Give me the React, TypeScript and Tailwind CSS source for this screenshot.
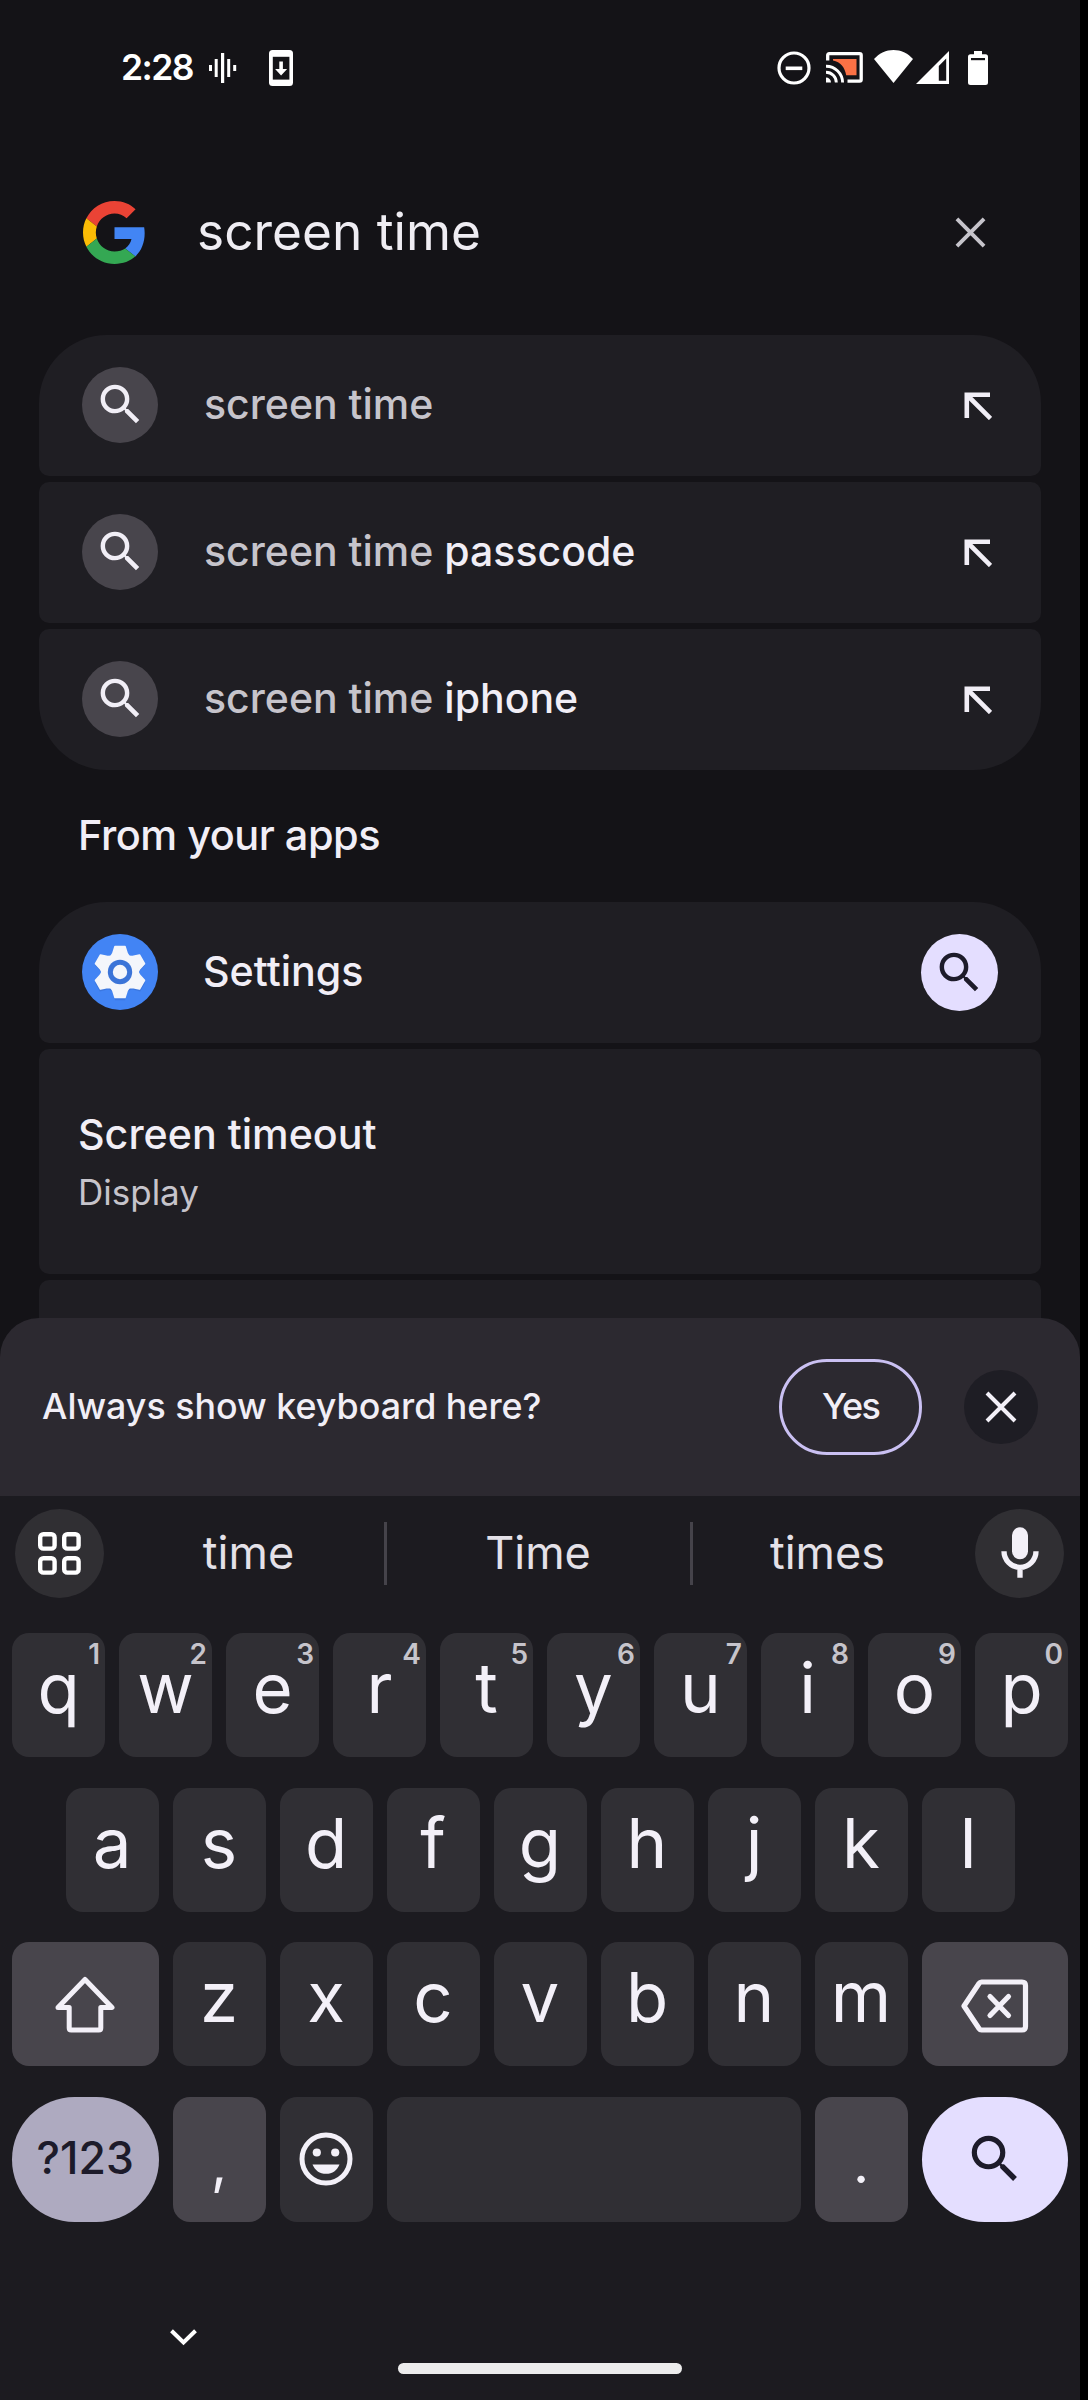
import React from "react";

/* ---------- icons ---------- */

function SearchIcon({ className }: { className: string }) {
  return (
    <svg viewBox="0 0 24 24" className={className} fill="currentColor">
      <path d="M15.5 14h-.79l-.28-.27A6.471 6.471 0 0 0 16 9.5 6.5 6.5 0 1 0 9.5 16c1.61 0 3.09-.59 4.23-1.57l.27.28v.79l5 4.99L20.49 19l-4.99-5zm-6 0C7.01 14 5 11.99 5 9.5S7.01 5 9.5 5 14 7.01 14 9.5 11.99 14 9.5 14z" />
    </svg>
  );
}

function GoogleLogo() {
  return (
    <svg viewBox="0 0 48 48" className="size-[63px]">
      <path fill="#ea4335" d="M24 9.5c3.54 0 6.71 1.22 9.21 3.6l6.85-6.85C35.9 2.38 30.47 0 24 0 14.62 0 6.51 5.38 2.56 13.22l7.98 6.19C12.43 13.72 17.74 9.5 24 9.5z" />
      <path fill="#4285f4" d="M46.98 24.55c0-1.57-.15-3.09-.38-4.55H24v9.02h12.94c-.58 2.96-2.26 5.48-4.78 7.18l7.73 6c4.51-4.18 7.09-10.36 7.09-17.65z" />
      <path fill="#fbbc05" d="M10.53 28.59c-.48-1.45-.76-2.99-.76-4.59s.27-3.14.76-4.59l-7.98-6.19C.92 16.46 0 20.12 0 24c0 3.88.92 7.54 2.56 10.78l7.97-6.19z" />
      <path fill="#34a853" d="M24 48c6.48 0 11.93-2.13 15.89-5.81l-7.73-6c-2.15 1.45-4.92 2.3-8.16 2.3-6.26 0-11.57-4.22-13.47-9.91l-7.98 6.19C6.51 42.62 14.62 48 24 48z" />
    </svg>
  );
}

function CloseIcon({ className }: { className: string }) {
  return (
    <svg viewBox="0 0 32 32" className={className} fill="none" stroke="currentColor" strokeWidth="4">
      <path d="M2 2l28 28M30 2L2 30" />
    </svg>
  );
}

function InsertArrow() {
  return (
    <svg viewBox="0 0 28 28" className="h-7 w-7 text-[#f1eef6]" fill="none" stroke="currentColor" strokeWidth="4.6">
      <path d="M26 2.8H2.8V26M3.5 3.5L26.5 26.5" />
    </svg>
  );
}

function SettingsIcon() {
  return (
    <svg viewBox="-38 -38 76 76" className="size-[76px]">
      <circle r="38" fill="#4284f4" />
      <g fill="#3569c9" opacity="0.45" transform="translate(0 2)">
        <circle r="19" />
        {[0, 60, 120, 180, 240, 300].map((a) => (
          <path key={a} transform={`rotate(${a})`} d="M-5 -26.2H5L7.2 -18.5L10 -14H-10L-7.2 -18.5Z" />
        ))}
      </g>
      <g fill="#f4f6fb" stroke="#f4f6fb" strokeWidth="1.6" strokeLinejoin="round">
        <circle r="18" />
        {[0, 60, 120, 180, 240, 300].map((a) => (
          <path key={a} transform={`rotate(${a})`} d="M-5 -25.4H5L7.2 -18.5L10 -14H-10L-7.2 -18.5Z" />
        ))}
      </g>
      <circle r="12.2" fill="#3b74d8" />
      <circle r="7.2" fill="#f4f6fb" />
    </svg>
  );
}

/* ---------- status bar ---------- */

function StatusBar() {
  return (
    <header className="flex h-[135px] items-center pr-[92px] pl-[121px] text-white">
      <span className="text-[35.5px] font-semibold tracking-[-1.6px]">2:28</span>
      <svg viewBox="0 0 28 30" className="ml-4 h-[30px] w-7" fill="currentColor">
        <rect x="0" y="12" width="3" height="6" />
        <rect x="5.7" y="6" width="3" height="18" />
        <rect x="12" y="0" width="3.2" height="30" />
        <rect x="18.2" y="6" width="3" height="18" />
        <rect x="24.2" y="12" width="3" height="6" />
      </svg>
      <svg viewBox="0 0 24 36" className="ml-8 h-9 w-6">
        <rect width="24" height="36" rx="3.5" fill="currentColor" />
        <rect x="3.8" y="6.8" width="16.6" height="22.8" fill="#141317" />
        <path fill="currentColor" d="M10.3 11.5h3.6v7.5h4.2L12.1 25.5 6.1 19h4.2z" />
      </svg>

      <div className="ml-auto flex items-center">
        <svg viewBox="0 0 34 34" className="size-[34px]" fill="none" stroke="currentColor">
          <circle cx="17" cy="17" r="15" strokeWidth="3.2" />
          <path d="M8.7 17.3h16.6" strokeWidth="3.6" />
        </svg>
        <svg viewBox="0 0 37 31" className="ml-[15px] h-[31px] w-[37px]" fill="none" stroke="currentColor">
          <path d="M7 7H30.5V23.3H20.2C19 15.5 14.5 10 7 8.5z" fill="#fb7145" stroke="none" />
          <path d="M1.7 8.5V3.2Q1.7 1.7 3.2 1.7H33.6Q35.2 1.7 35.2 3.2V27.6Q35.2 29.2 33.6 29.2H21.5" strokeWidth="3.3" />
          <path d="M0 14.2A16.4 16.4 0 0 1 16.6 30.6M0 20.3A10.3 10.3 0 0 1 10.3 30.6" strokeWidth="2.9" />
          <path d="M0 25.6a5 5 0 0 1 5 5H0z" fill="currentColor" stroke="none" />
        </svg>
        <svg viewBox="0 0 39 33" className="-mt-0.5 ml-[11px] h-[33px] w-[39px]" fill="currentColor">
          <path d="M0 9C5.5 3 12 0 19.5 0S33.5 3 39 9L19.5 33z" />
        </svg>
        <svg viewBox="0 0 33 33" className="ml-[3px] h-[33px] w-[33px]" fill="currentColor">
          <path fillRule="evenodd" d="M33 0V33H0zM30.2 7.5L22.8 15V29.8H30.2z" />
        </svg>
        <svg viewBox="0 0 20 34" className="ml-[19px] h-[34px] w-5">
          <path fill="currentColor" d="M6 0h8v3.3h3.5Q20 3.3 20 5.8V31.5Q20 34 17.5 34H2.5Q0 34 0 31.5V5.8Q0 3.3 2.5 3.3H6z" />
          <rect x="3" y="7" width="14" height="2.2" fill="#141317" />
        </svg>
      </div>
    </header>
  );
}

/* ---------- search results ---------- */

function Suggestion({ completion, shape }: { completion?: string; shape: string }) {
  return (
    <li className={`flex h-[141px] items-center bg-[#1f1e23] pr-[49px] pb-0.5 pl-[43px] ${shape}`}>
      <span className="flex size-[76px] items-center justify-center rounded-full bg-[#48454c] text-[#f1eef6]">
        <SearchIcon className="size-[53px]" />
      </span>
      <span className="ml-[46px] flex-1 text-[41px] leading-none font-medium text-[#f1eef6]">
        <span className="text-[#c6c4cb]">screen time</span>
        {completion ? ` ${completion}` : null}
      </span>
      <span className="mt-0.5">
        <InsertArrow />
      </span>
    </li>
  );
}

function Results() {
  return (
    <main className="px-[39px]">
      <ul className="flex flex-col gap-1.5">
        <Suggestion shape="rounded-t-[68px] rounded-b-[10px]" />
        <Suggestion completion="passcode" shape="rounded-[10px]" />
        <Suggestion completion="iphone" shape="rounded-t-[10px] rounded-b-[68px]" />
      </ul>

      <h2 className="flex h-[132px] items-center pl-[39px] text-[41.5px] leading-none font-medium tracking-[-0.5px] text-[#f1eef6]">
        From your apps
      </h2>

      <section className="flex flex-col gap-1.5">
        <div className="flex h-[141px] items-center rounded-t-[68px] rounded-b-[10px] bg-[#1f1e23] px-[43px] pb-px">
          <SettingsIcon />
          <span className="ml-[45px] flex-1 text-[41.2px] leading-none font-medium text-[#f1eef6]">Settings</span>
          <button className="flex size-[77px] items-center justify-center rounded-full bg-[#e4deff] text-[#1d1b2a]">
            <SearchIcon className="size-[53px]" />
          </button>
        </div>
        <div className="flex h-[225px] flex-col justify-center gap-[13px] rounded-[10px] bg-[#1f1e23] pl-[39px]">
          <span className="text-[41.2px] leading-[48px] font-medium text-[#f1eef6]">Screen timeout</span>
          <span className="text-[35px] leading-[42px] text-[#c6c4cb]">Display</span>
        </div>
        <div className="h-[80px] rounded-t-[10px] bg-[#1f1e23]" />
      </section>
    </main>
  );
}

/* ---------- keyboard ---------- */

const KEY = "relative flex h-[124px] w-[93px] shrink-0 justify-center rounded-[17px] bg-[#302f34]";

function LetterKey({ letter, hint }: { letter: string; hint?: string }) {
  return (
    <button className={KEY}>
      <span className="text-[69px] leading-[110px] text-[#f3f0f8]">{letter}</span>
      {hint ? (
        <span className="absolute top-0 right-[5px] text-[28px] leading-[43px] font-semibold text-[#c6c4cb]">{hint}</span>
      ) : null}
    </button>
  );
}

function Letters({ letters }: { letters: string }) {
  return (
    <>
      {letters.split("").map((l) => (
        <LetterKey key={l} letter={l} />
      ))}
    </>
  );
}

function SuggestionStrip() {
  return (
    <div className="flex h-[115px] items-center pr-4 pl-[15px]">
      <button className="flex size-[89px] items-center justify-center rounded-full bg-[#302f33]">
        <svg viewBox="0 0 43 43" className="size-[43px]" fill="none" stroke="#ffffff" strokeWidth="4.4">
          <rect x="2.2" y="2.2" width="14.4" height="14.4" rx="3.2" />
          <rect x="26.2" y="2.2" width="14.4" height="14.4" rx="3.2" />
          <rect x="2.2" y="26.2" width="14.4" height="14.4" rx="3.2" />
          <rect x="26.2" y="26.2" width="14.4" height="14.4" rx="3.2" />
        </svg>
      </button>
      <div className="flex flex-1 items-center text-[45px] leading-none text-[#e4e1e8]">
        <span className="w-[280px] pb-[3px] pl-[9px] text-center">time</span>
        <span className="h-[63px] w-[3px] bg-[#45434a]" />
        <span className="w-[303px] pr-px pb-[3px] text-center">Time</span>
        <span className="h-[63px] w-[3px] bg-[#45434a]" />
        <span className="flex-1 pr-[13px] pb-[3px] text-center">times</span>
      </div>
      <button className="flex size-[89px] items-center justify-center rounded-full bg-[#302f33]">
        <svg viewBox="0 0 24 24" className="size-16" fill="none" stroke="#f3f0f8" strokeWidth="2">
          <rect x="9" y="2" width="6" height="12" rx="3" fill="#f3f0f8" stroke="none" />
          <path d="M6 11a6 6 0 0 0 12 0M12 17v3.9" />
        </svg>
      </button>
    </div>
  );
}

function Keyboard() {
  const top = "qwertyuiop".split("");
  return (
    <section className="flex flex-1 flex-col bg-[#1c1b20]">
      <SuggestionStrip />
      <div className="mt-[22px] flex flex-col gap-[30.6px] px-3">
        <div className="flex gap-3.5">
          {top.map((l, i) => (
            <LetterKey key={l} letter={l} hint={String((i + 1) % 10)} />
          ))}
        </div>
        <div className="flex justify-center gap-3.5">
          <Letters letters="asdfghjkl" />
        </div>
        <div className="flex gap-3.5">
          <button className="flex h-[124px] flex-1 items-center justify-center rounded-[17px] bg-[#48454c]">
            <svg viewBox="0 0 60 57" className="h-[57px] w-[60px]" fill="none" stroke="#f3f0f8" strokeWidth="5" strokeLinejoin="round">
              <path d="M30 3.5L57 31.5H45.8V52Q45.8 54 43.8 54H16.2Q14.2 54 14.2 52V31.5H3z" />
            </svg>
          </button>
          <Letters letters="zxcvbnm" />
          <button className="flex h-[124px] flex-1 items-center justify-center rounded-[17px] bg-[#48454c]">
            <svg viewBox="0 0 68 54" className="mt-1 h-[54px] w-[68px]" fill="none" stroke="#f3f0f8" strokeWidth="5.2" strokeLinejoin="round" strokeLinecap="round">
              <path d="M20.5 3H61Q64.5 3 64.5 6.5V47.5Q64.5 51 61 51H20.5Q19 51 18 49.5L3 27L18 4.5Q19 3 20.5 3z" />
              <path d="M29 17.5L47.5 36.5M47.5 17.5L29 36.5" />
            </svg>
          </button>
        </div>
        <div className="flex gap-3.5">
          <button className="h-[125px] flex-1 rounded-full bg-[#aeaac0] pb-0.5 text-[44.5px] leading-[121px] font-medium text-[#1d1b2a]">
            ?123
          </button>
          <button className="h-[125px] w-[93px] rounded-[17px] bg-[#48454c] text-[56px] leading-[132px] text-[#f3f0f8]">,</button>
          <button className="flex h-[125px] w-[93px] items-center justify-center rounded-[17px] bg-[#302f34]">
            <svg viewBox="0 0 54 54" className="size-[54px]" fill="#f3f0f8">
              <circle cx="27" cy="27" r="24" fill="none" stroke="#f3f0f8" strokeWidth="5" />
              <circle cx="17.8" cy="20.5" r="4.1" />
              <circle cx="36.2" cy="20.5" r="4.1" />
              <path d="M13.5 32.5H40.5C38 38.5 33.5 41.8 27 41.8S16 38.5 13.5 32.5z" />
            </svg>
          </button>
          <button aria-label="space" className="h-[125px] w-[414px] rounded-[17px] bg-[#302f34]" />
          <button className="h-[125px] w-[93px] rounded-[17px] bg-[#48454c] text-[56px] leading-[132px] text-[#f3f0f8]">.</button>
          <button className="flex h-[125px] flex-1 items-center justify-center rounded-full bg-[#e4deff] text-[#1d1b2a]">
            <SearchIcon className="size-[62px]" />
          </button>
        </div>
      </div>

      <div className="mt-[107px] pl-[170px]">
        <svg viewBox="0 0 27 17" className="h-[17px] w-[27px]" fill="none" stroke="#ffffff" strokeWidth="4">
          <path d="M1.5 1.8L13.5 13.5L25.5 1.8" />
        </svg>
      </div>
      <div className="mt-[17px] flex justify-center">
        <span className="h-[11px] w-[284px] rounded-full bg-[#ececec]" />
      </div>
    </section>
  );
}

/* ---------- page ---------- */

export default function App() {
  return (
    <div className="w-[1088px] bg-black font-['Inter',sans-serif]">
      <div className="flex h-[2400px] w-[1080px] flex-col overflow-hidden bg-[#141317]">
        <div className="h-[1358px] shrink-0 overflow-hidden">
          <StatusBar />
          <div className="flex h-[200px] items-start pr-[94px] pl-[83px]">
            <div className="flex h-[194px] flex-1 items-center">
              <GoogleLogo />
              <span className="ml-[51px] flex-1 text-[51.4px] leading-none text-[#efedf3]">screen time</span>
              <CloseIcon className="size-[31px] text-[#c6c4cb]" />
            </div>
          </div>
          <Results />
        </div>

        <div className="relative -mt-10 flex h-[178px] shrink-0 items-center rounded-t-[39px] bg-[#2c2930] px-[42px]">
          <span className="flex-1 text-[35.8px] leading-none font-medium text-[#f1eef6]">Always show keyboard here?</span>
          <button className="h-24 w-[143px] rounded-full border-[3px] border-[#cac0f2] pb-0.5 text-[36px] leading-none font-medium tracking-[-1.8px] text-[#f1eef6]">
            Yes
          </button>
          <button className="ml-[42px] flex size-[74px] items-center justify-center rounded-full bg-[#1e1d24]">
            <CloseIcon className="size-8 text-[#f3f0f8]" />
          </button>
        </div>

        <Keyboard />
      </div>
    </div>
  );
}
